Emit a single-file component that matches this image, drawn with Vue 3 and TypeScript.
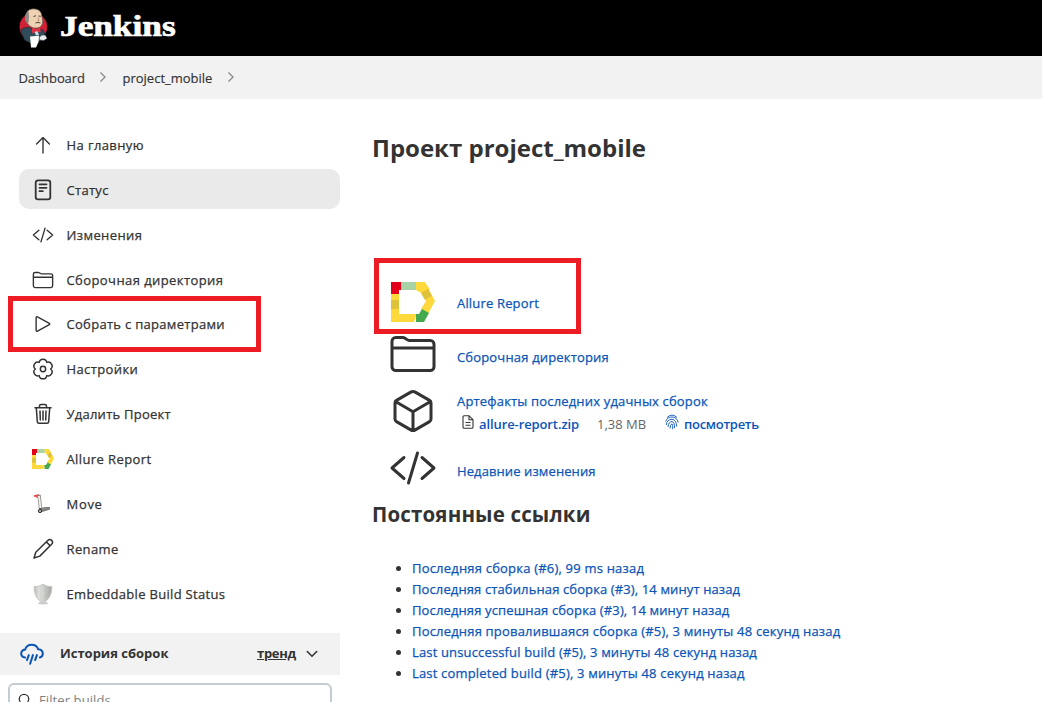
<script setup lang="ts">
interface Task { id: string; label: string; spacing: number }
interface Permalink { label: string; spacing: number }

const tasks: Task[] = [
  { id: 'up', label: 'На главную', spacing: 0.4 },
  { id: 'status', label: 'Статус', spacing: 0.3 },
  { id: 'code', label: 'Изменения', spacing: 0.4 },
  { id: 'folder', label: 'Сборочная директория', spacing: 0.42 },
  { id: 'play', label: 'Собрать с параметрами', spacing: 0.3 },
  { id: 'gear', label: 'Настройки', spacing: 0.4 },
  { id: 'trash', label: 'Удалить Проект', spacing: 0.24 },
  { id: 'allure', label: 'Allure Report', spacing: 0.4 },
  { id: 'move', label: 'Move', spacing: 0.7 },
  { id: 'rename', label: 'Rename', spacing: 0.4 },
  { id: 'shield', label: 'Embeddable Build Status', spacing: 0.31 },
]

const permalinks: Permalink[] = [
  { label: 'Последняя сборка (#6), 99 ms назад', spacing: 0.2 },
  { label: 'Последняя стабильная сборка (#3), 14 минут назад', spacing: 0.12 },
  { label: 'Последняя успешная сборка (#3), 14 минут назад', spacing: 0.13 },
  { label: 'Последняя провалившаяся сборка (#5), 3 минуты 48 секунд назад', spacing: 0.19 },
  { label: 'Last unsuccessful build (#5), 3 минуты 48 секунд назад', spacing: 0.15 },
  { label: 'Last completed build (#5), 3 минуты 48 секунд назад', spacing: 0.18 },
]
</script>

<template>
  <svg class="defs" width="0" height="0">
    <symbol id="up" viewBox="0 0 512 512"><path class="ln" d="M106 232l150-148 150 148M256 90v350" /></symbol>
    <symbol id="status" viewBox="0 0 22 22">
      <rect class="ln2 thick" x="3.7" y="1.3" width="14.6" height="19" rx="2.4" />
      <path class="ln2 thick" d="M7.500 5.300h7M7.500 8.800h7M7.500 12.200h3.300" />
    </symbol>
    <symbol id="code" viewBox="0 0 512 512"><path class="ln" d="M160 368L32 256l128-112M352 368l128-112-128-112M304 96l-96 320" /></symbol>
    <symbol id="folder" viewBox="0 0 512 512">
      <path class="ln" d="M440 432H72a40 40 0 01-40-40V120a40 40 0 0140-40h75.9a40 40 0 0122.2 6.7l27.8 18.6a40 40 0 0022.2 6.7H440a40 40 0 0140 40v240a40 40 0 01-40 40zM32 192h448" />
    </symbol>
    <symbol id="play" viewBox="0 0 512 512"><path class="ln" d="M96 111v290c0 17.400 17 28.500 31 20.200l277-148.400c12-7.300 12-26.300 0-33.600L127 90.800c-14-8.300-31 2.800-31 20.200z" /></symbol>
    <symbol id="gear" viewBox="0 0 24 24">
      <path class="ln3" d="M20.300 12A4.200 4.200 0 0116.150 19.200A4.200 4.200 0 017.850 19.200A4.200 4.200 0 013.700 12A4.200 4.200 0 017.850 4.800A4.200 4.200 0 0116.150 4.800A4.200 4.200 0 0120.300 12z" />
      <circle class="ln3" cx="12" cy="12" r="2.900" />
    </symbol>
    <symbol id="trash" viewBox="0 0 22 22">
      <path class="ln2" d="M4.300 5l1 13.600q.1 1.700 1.700 1.700h8q1.600 0 1.700-1.700l1-13.600M3 4.700h16M7.500 4.500V3q0-1.500 1.500-1.500h4q1.500 0 1.500 1.500v1.500M11 8v9M8 8l.3 9M14 8l-.3 9" />
    </symbol>
    <symbol id="allure" viewBox="0 0 44 40">
      <path fill="#ffd93b" d="M0 8h8v24h18l-3 8H0zM24 0h10l5 8-7 4-7-4zM31 12l7-4 6 11-7 13-7-5 5-8z" />
      <path fill="#a7d3a6" d="M10 0h15v8H10z" /><path fill="#e2001a" d="M0 0h10v8H8v4H0z" />
      <path fill="#e0c13a" d="M0 18h8v9H0zM30 11l7-4 4 7-7 4z" /><path fill="#43a94c" d="M31 27l7 4-5 9h-8v-8h3z" />
    </symbol>
    <symbol id="move" viewBox="0 0 22 22">
      <path d="M2.500 3l4-1M5 2.500v1.800" stroke="#e63c42" stroke-width="1.400" stroke-linecap="round" />
      <path d="M7 2l1.600 14" stroke="#8b8b88" stroke-width="3.400" /><path d="M7 3l1.500 12" stroke="#f0f0ea" stroke-width="1.900" />
      <path d="M7 16q5-2 10.500-1.500v1.800L10 18.500z" fill="#8a8a85" stroke="#55554f" stroke-width=".7" /><circle cx="8" cy="18" r="1.700" fill="#aaa" stroke="#333" />
    </symbol>
    <symbol id="rename" viewBox="0 0 22 22"><path class="ln2" d="M2 20l1.800-5.800L15.700 2.500c2.800-2.600 6.500 1 3.900 3.800L7.800 18.100zM14.300 3.900l3.900 3.800" /></symbol>
    <symbol id="shield" viewBox="0 0 22 22">
      <defs><linearGradient id="metal"><stop offset="0" stop-color="#b4b6b2" /><stop offset=".25" stop-color="#dddfda" /><stop offset=".5" stop-color="#cdcfca" /><stop offset="1" stop-color="#a2a5a0" /></linearGradient></defs>
      <ellipse cx="11" cy="20.200" rx="5" ry="1.200" fill="#ccc" />
      <path fill="url(#metal)" stroke="#c8cac6" d="M11 1.300q4 2.500 9 2.300-.2 12.500-9 16.200Q2.200 16.100 2 3.600q5 .2 9-2.300z" />
      <path d="M11 4v14" stroke="#eee" stroke-width=".7" stroke-dasharray="1 1.500" />
    </symbol>
    <symbol id="cube" viewBox="0 0 512 512">
      <path class="ln" d="M448 341.400V170.600A32 32 0 00432.100 143l-152-88.500a48 48 0 00-48.200 0L79.900 143A32 32 0 0064 170.600v170.800A32 32 0 0079.900 369l152 88.500a48 48 0 0048.200 0l152-88.500A32 32 0 00448 341.400zM69 154l187 110 187-110M256 464V264" />
    </symbol>
  </svg>

  <div class="page">
    <header>
      <svg class="butler" viewBox="0 0 30 40">
        <ellipse cx="14.300" cy="19" rx="13.800" ry="14" fill="#d02035" />
        <path d="M1.500 22q3-3 9-2.500l6 3 6-1.500q3 2 4 7l-5 5-10 2-6-3z" fill="#304c5b" stroke="#18262e" stroke-width=".7" />
        <path d="M6.500 9Q7 .8 14.500.8q8 .2 8.500 7.700l.8 4.500q0 6-5.300 7-4 1-8-2Q7 15 6.500 9z" fill="#eed1b3" stroke="#51453c" stroke-width=".7" />
        <path d="M9.500 3Q5 6 6 12l2.500 4 1.500-3q-1-2 0-3.500z" fill="#8d877e" />
        <path d="M14.500 8.500l2.500-.8M19.500 8l2.300.3M16.500 15q2.500-1.200 5 0" stroke="#3c3530" fill="none" stroke-width=".9" />
        <path d="M19 9.500l1 3-1.500.4" stroke="#a57f67" fill="none" stroke-width=".8" />
        <path d="M13 19.500l4.500 2 4-2v5l-4-1-4.500 2z" fill="#e13043" /><path d="M15.500 24l3-1 1.500 4-3 .5z" fill="#c8d9e0" />
        <path d="M11 28.500l9-.7-.5 6.200-2.500 5.500h-5z" fill="#fff" /><path d="M20.500 29q3-3 6-1.500l1.500 3-3.500 2-4-.8z" fill="#edf0ef" stroke="#50616a" stroke-width=".5" />
      </svg>
      <span class="brand">Jenkins</span>
    </header>
    <nav class="crumbs">
      <a>Dashboard</a><svg viewBox="0 0 8 12"><path d="M1.500 1.500L6 6l-4.500 4.500" /></svg>
      <a class="second">project_mobile</a><svg viewBox="0 0 8 12"><path d="M1.500 1.500L6 6l-4.500 4.500" /></svg>
    </nav>
    <div class="body">
      <aside>
        <div class="tasks">
          <a v-for="t in tasks" :key="t.id" class="task" :class="{ active: t.id === 'status' }">
            <svg class="ico"><use :href="'#' + t.id" /></svg>
            <span :style="{ letterSpacing: t.spacing + 'px' }">{{ t.label }}</span>
          </a>
        </div>
        <div class="history">
          <svg class="cloud" viewBox="0 0 26 24">
            <path d="M5.500 15.300C2.800 15 1.300 13.300 1.300 11c0-2.500 1.800-4 4.300-4.400C6.400 3.400 9 1.400 12.700 1.400c3.300 0 6 2 6.900 4.800 3.300.2 5.100 2.100 5.100 4.700 0 2.300-1.200 3.800-3.200 4.400M9.500 12.700l-1.900 5.300M14 12.700l-3 9.300M18.300 12.700l-1.900 5.300" />
          </svg>
          <b class="title">История сборок</b><b class="trend">тренд</b>
          <svg class="chev" viewBox="0 0 12 8"><path d="M1.300 1.500L6 6.200l4.700-4.700" /></svg>
        </div>
        <div class="filter">
          <svg viewBox="0 0 14 14"><circle cx="6" cy="6" r="4.700" /><path d="M9.500 9.500l3.500 3.500" /></svg>
          <span>Filter builds...</span>
        </div>
        <div class="mark mark-build"></div>
      </aside>
      <main>
        <h1><span>Проект project_mobile</span></h1>
        <div class="row r1"><svg class="allure"><use href="#allure" /></svg><a>Allure Report</a><div class="mark mark-allure"></div></div>
        <div class="row r2"><svg class="big"><use href="#folder" /></svg><a>Сборочная директория</a></div>
        <div class="row r3">
          <svg class="big"><use href="#cube" /></svg>
          <div class="art">
            <a>Артефакты последних удачных сборок</a>
            <div class="file">
              <svg class="doc" viewBox="0 0 12 14"><path d="M7 .7H2.200Q1 .7 1 2v10q0 1.300 1.200 1.300h7.600Q11 13.300 11 12V4.700zM7 .7v4h4M3.500 7.500h5M3.500 10.200h5" /></svg>
              <a class="zip">allure-report.zip</a><span class="size">1,38 MB</span>
              <svg class="finger" viewBox="0 0 14 16"><path d="M2 3.500Q7-1.300 12 3.500M.8 7.500Q2 3 7 3t6.200 5.500M1.200 11Q2 5.500 7 5.300q4.500.2 4.600 7.200M3 13Q3.500 7.700 7 7.600q2.600.2 2.600 6.500M5 14.500Q5.200 10 7 9.900q1 .2.700 5.300" /></svg>
              <a class="look">посмотреть</a>
            </div>
          </div>
        </div>
        <div class="row r4"><svg class="big"><use href="#code" /></svg><a>Недавние изменения</a></div>
        <h2><span>Постоянные ссылки</span></h2>
        <ul>
          <li v-for="p in permalinks" :key="p.label"><a :style="{ letterSpacing: p.spacing + 'px' }">{{ p.label }}</a></li>
        </ul>
      </main>
    </div>
  </div>
</template>

<style>
body { overflow: hidden; }
</style>
<style scoped>
.page { height: 702px; overflow: hidden; background: #fff; color: #333; font: 500 13px/20px "Open Sans", "Noto Sans", sans-serif; white-space: nowrap; }
.defs { position: absolute; }
svg { flex: none; }
.ln { fill: none; stroke: #333; stroke-width: 32; stroke-linecap: round; stroke-linejoin: round; }
.ln2 { fill: none; stroke: #333; stroke-width: 1.5; stroke-linecap: round; stroke-linejoin: round; }
.thick { stroke-width: 1.8; }
.ln3 { fill: none; stroke: #333; stroke-width: 1.6; stroke-linejoin: round; }
header { height: 56px; background: #000; display: flex; align-items: flex-start; padding-left: 19px; }
.butler { width: 30px; height: 40px; margin-top: 8px; }
.brand { margin: 8px 0 0 10.5px; color: #fff; font: bold 30px/36px "Liberation Serif", serif; -webkit-text-stroke: 0.7px #fff; transform: scaleX(1.175); transform-origin: left; }
.crumbs { height: 43px; background: #f2f2f2; display: flex; align-items: center; padding-left: 18.5px; letter-spacing: -0.08px; -webkit-text-stroke: 0.15px; }
.crumbs a { width: 80.5px; }
.crumbs .second { width: 89px; margin-left: 15.5px; letter-spacing: 0; }
.crumbs svg { width: 8px; height: 12px; margin-top: -1px; fill: none; stroke: #888; stroke-width: 1.3; }
.crumbs .second + svg { margin-left: 15px; }
.body { display: flex; }
aside { width: 340px; position: relative; }
.tasks { padding: 25px 0 0 19px; display: flex; flex-direction: column; gap: 5px; }
.task { height: 40px; display: flex; align-items: center; border-radius: 10px; padding-left: 13px; -webkit-text-stroke: 0.25px; }
.task:nth-child(-n+4) span { padding-top: 2px; }
.task:nth-child(-n+4) .ico { margin-top: 1px; }
.task.active { background: #eaeaea; }
.ico { width: 22px; height: 22px; margin-right: 12.5px; }
.history { margin-top: 19px; height: 42px; background: #f2f2f2; display: flex; align-items: center; padding-left: 20px; }
.cloud { width: 24px; height: 23px; fill: none; stroke: #0b55b8; stroke-width: 2.2; stroke-linecap: round; }
.title { margin: -2px 0 0 16px; width: 197px; }
.trend { margin-top: -2px; width: 40px; text-decoration: underline; letter-spacing: -0.3px; }
.chev { width: 12px; height: 8px; margin-left: 9px; fill: none; stroke: #333; stroke-width: 1.6; stroke-linecap: round; }
.filter { margin: 8px 0 0 8px; width: 324px; height: 34px; box-sizing: border-box; border: 2px solid #c3ccd1; border-radius: 6px; display: flex; align-items: center; padding-left: 8px; color: #808080; font-weight: 400; letter-spacing: 0.1px; }
.filter svg { width: 14px; height: 14px; margin-right: 7px; fill: none; stroke: #333; stroke-width: 1.3; }
.mark { position: absolute; box-sizing: border-box; border: 5px solid #ed1c24; }
.mark-build { left: 8px; top: 197px; width: 253px; height: 56px; }
.mark-allure { left: 2px; top: -9px; width: 207px; height: 76px; }
main { padding-left: 372px; margin-left: -340px; color: #333; }
main a { color: #0b55b8; letter-spacing: 0.17px; -webkit-text-stroke: 0.25px; }
h1 { margin: 30px 0 0; height: 40px; font: bold 24px/37px "Open Sans", sans-serif; }
.row { display: flex; position: relative; align-items: center; padding-left: 18px; }
.r1 { margin-top: 98px; height: 66px; }
.allure { width: 44px; height: 40px; margin: 4px 22px 0 1px; }
.r1 > a { margin-top: 6px; }
.big { width: 48px; height: 48px; margin: 0 20px 0 -1px; }
.r2 { height: 46px; margin-top: -2px; }
.r2 > a { margin-top: 6px; }
.r3 { height: 46px; margin-top: 11px; }
.art { display: flex; flex-direction: column; gap: 3px; padding-top: 3px; }
.file { display: flex; align-items: center; }
.doc { width: 12px; height: 14px; margin: -4px 5px 0 5px; fill: none; stroke: #333; stroke-width: 1.1; }
.zip { width: 118px; font-weight: 600; letter-spacing: -0.1px; -webkit-text-stroke: 0; }
.size { width: 68px; color: #666; font-weight: 400; }
.finger { width: 14px; height: 16px; margin: -5px 5px 0 0; fill: none; stroke: #0b55b8; stroke-width: .9; }
.look { font-weight: 600; letter-spacing: -0.28px; -webkit-text-stroke: 0; }
.r4 { height: 46px; margin-top: 11px; }
.r4 > a { margin-top: 6px; letter-spacing: 0.1px; }
h2 { margin: 5px 0 0; height: 40px; font: bold 20.500px/36px "Open Sans", sans-serif; letter-spacing: 0.16px; }
ul { margin: 22px 0 0; padding-left: 40px; }
li { height: 21px; line-height: 21px; }
</style>
